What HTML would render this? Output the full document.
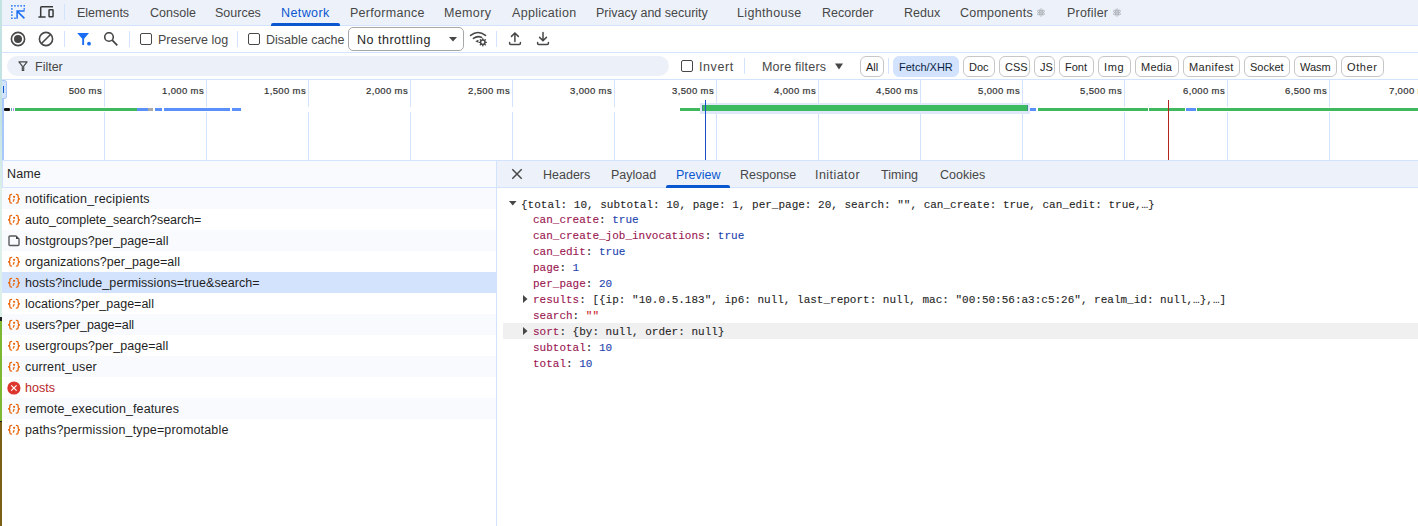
<!DOCTYPE html>
<html><head><meta charset="utf-8">
<style>
*{box-sizing:border-box}
html,body{margin:0;padding:0}
body{width:1418px;height:526px;overflow:hidden;position:relative;background:#fff;font-family:"Liberation Sans",sans-serif;color:#1f1f1f}
.a{position:absolute}
.t{position:absolute;white-space:pre;line-height:14px;font-size:12.5px;color:#474747}
.hl{position:absolute;height:1px;background:#d3e3fd}
.vl{position:absolute;width:1px;background:#d3e3fd}
.chip{position:absolute;top:56px;height:21px;border:1px solid #c7c7c7;border-radius:6px;font-size:11px;line-height:21px;color:#1f1f1f;white-space:pre;padding-left:5px}
.row{position:absolute;left:2px;width:494px;height:21px}
.rt{position:absolute;left:23px;top:4px;white-space:pre;font-size:12.5px;line-height:14px;color:#1f1f1f}
.ic{position:absolute;left:6px;top:5px}
.js{position:absolute;white-space:pre;font-family:"Liberation Mono",monospace;font-size:11px;line-height:16px;color:#1f1f1f;-webkit-text-stroke:0.1px}
.k{color:#9a1550}
.b{color:#1c42ae}
.s{color:#c5221f}
.n{color:#474747}
.tl{position:absolute;top:86px;font-size:9.5px;line-height:9px;color:#333;white-space:pre;text-align:right;letter-spacing:0.35px;-webkit-text-stroke:0.2px}
</style></head>
<body>
<!-- left strip of underlying page -->
<div class="a" style="left:0;top:0;width:2px;height:317px;background:linear-gradient(#c3e3e3 0,#c3e3e3 120px,#dcefe9 190px,#dcefe9 317px)"></div>
<div class="a" style="left:0;top:317px;width:2px;height:4px;background:#222"></div>
<div class="a" style="left:0;top:321px;width:2px;height:100px;background:#7cb832"></div>
<div class="a" style="left:0;top:421px;width:2px;height:1px;background:#222"></div>
<div class="a" style="left:0;top:422px;width:2px;height:104px;background:#7a5f14"></div>

<!-- ===== main tab bar ===== -->
<div class="a" style="left:2px;top:0;width:1416px;height:25px;background:#edf2fa"></div>
<div class="hl" style="left:2px;top:25px;width:1416px"></div>
<!-- inspect + device icons -->
<svg class="a" style="left:8px;top:2px" width="50" height="20" viewBox="0 0 50 20">
<g fill="#1b6ef3">
<rect x="3.1" y="3.1" width="1.5" height="1.5"/><rect x="6.2" y="3.1" width="1.5" height="1.5"/><rect x="9.3" y="3.1" width="1.5" height="1.5"/><rect x="12.4" y="3.1" width="1.5" height="1.5"/><rect x="15.5" y="3.1" width="1.5" height="1.5"/>
<rect x="3.1" y="6.2" width="1.5" height="1.5"/><rect x="3.1" y="9.3" width="1.5" height="1.5"/><rect x="3.1" y="12.4" width="1.5" height="1.5"/><rect x="3.1" y="15.5" width="1.5" height="1.5"/>
<rect x="15.5" y="6.2" width="1.5" height="1.5"/><rect x="6.2" y="15.5" width="1.5" height="1.5"/>
</g>
<path d="M9.1 16.7 V9.1 H16.7 M9.1 9.1 L16.4 16.4" stroke="#1b6ef3" stroke-width="1.5" fill="none"/>
<path d="M30.4 15 H37.6 M32.7 15 V5.5 Q32.7 4.75 33.5 4.75 H45" stroke="#3a3a3a" stroke-width="1.5" fill="none"/>
<rect x="41.05" y="7.75" width="4" height="7.1" rx="0.6" stroke="#3a3a3a" stroke-width="1.5" fill="none"/>
</svg>
<div class="vl" style="left:64px;top:4px;height:16px"></div>
<div class="t" style="left:77px;top:6px">Elements</div>
<div class="t" style="left:150px;top:6px">Console</div>
<div class="t" style="left:215px;top:6px">Sources</div>
<div class="t" style="left:281px;top:6px;color:#0b57d0;letter-spacing:0.4px">Network</div>
<div class="a" style="left:271px;top:23px;width:69px;height:3px;background:#0b57d0;border-radius:2px 2px 0 0"></div>
<div class="t" style="left:350px;top:6px;letter-spacing:0.28px">Performance</div>
<div class="t" style="left:444px;top:6px;letter-spacing:0.35px">Memory</div>
<div class="t" style="left:512px;top:6px;letter-spacing:0.3px">Application</div>
<div class="t" style="left:596px;top:6px">Privacy and security</div>
<div class="t" style="left:737px;top:6px;letter-spacing:0.35px">Lighthouse</div>
<div class="t" style="left:822px;top:6px">Recorder</div>
<div class="t" style="left:904px;top:6px">Redux</div>
<div class="t" style="left:960px;top:6px;letter-spacing:0.2px">Components</div>
<div class="t" style="left:1067px;top:6px;letter-spacing:0.2px">Profiler</div>
<svg class="a" style="left:1036px;top:7px" width="10" height="11" viewBox="0 0 10 11"><g stroke="#a9adb3" stroke-width="0.7" fill="none"><ellipse cx="5" cy="5.5" rx="1.5" ry="3.9"/><ellipse cx="5" cy="5.5" rx="1.5" ry="3.9" transform="rotate(60 5 5.5)"/><ellipse cx="5" cy="5.5" rx="1.5" ry="3.9" transform="rotate(-60 5 5.5)"/></g><circle cx="5" cy="5.5" r="0.8" fill="#a9adb3"/></svg>
<svg class="a" style="left:1112px;top:7px" width="10" height="11" viewBox="0 0 10 11"><g stroke="#a9adb3" stroke-width="0.7" fill="none"><ellipse cx="5" cy="5.5" rx="1.5" ry="3.9"/><ellipse cx="5" cy="5.5" rx="1.5" ry="3.9" transform="rotate(60 5 5.5)"/><ellipse cx="5" cy="5.5" rx="1.5" ry="3.9" transform="rotate(-60 5 5.5)"/></g><circle cx="5" cy="5.5" r="0.8" fill="#a9adb3"/></svg>

<!-- ===== toolbar ===== -->
<!-- record -->
<svg class="a" style="left:10px;top:31px" width="16" height="16" viewBox="0 0 16 16">
<circle cx="8" cy="8" r="6.6" stroke="#474747" stroke-width="1.6" fill="none"/><circle cx="8" cy="8" r="4" fill="#474747"/>
</svg>
<!-- clear -->
<svg class="a" style="left:38px;top:31px" width="16" height="16" viewBox="0 0 16 16">
<circle cx="8" cy="8" r="6.6" stroke="#474747" stroke-width="1.6" fill="none"/><path d="M3.5 12.5 L12.5 3.5" stroke="#474747" stroke-width="1.6"/>
</svg>
<div class="vl" style="left:64px;top:31px;height:16px"></div>
<!-- filter funnel -->
<svg class="a" style="left:76px;top:32px" width="16" height="15" viewBox="0 0 16 15">
<path d="M1.2 1 H13 L8.1 6.8 V12.9 H6.2 V6.8 Z" fill="#1b6ef3"/><circle cx="13" cy="11.7" r="1.9" fill="#1b6ef3"/>
</svg>
<!-- search -->
<svg class="a" style="left:103px;top:32px" width="16" height="15" viewBox="0 0 16 15">
<circle cx="6" cy="5" r="4.3" stroke="#474747" stroke-width="1.6" fill="none"/><path d="M9.2 8.2 L14.3 13.3" stroke="#474747" stroke-width="1.8"/>
</svg>
<div class="vl" style="left:129px;top:31px;height:16px"></div>
<div class="a" style="left:140px;top:33px;width:12px;height:12px;border:1.5px solid #474747;border-radius:2px"></div>
<div class="t" style="left:158px;top:33px">Preserve log</div>
<div class="vl" style="left:237px;top:31px;height:16px"></div>
<div class="a" style="left:248px;top:33px;width:12px;height:12px;border:1.5px solid #474747;border-radius:2px"></div>
<div class="t" style="left:266px;top:33px">Disable cache</div>
<div class="a" style="left:348px;top:27px;width:116px;height:24px;border:1px solid #a8a8a8;border-radius:5px"></div>
<div class="t" style="left:357px;top:33px;color:#1f1f1f;letter-spacing:0.5px">No throttling</div>
<svg class="a" style="left:449px;top:37px" width="8" height="5" viewBox="0 0 8 5"><path d="M0 0 H8 L4 4.5 Z" fill="#474747"/></svg>
<!-- wifi gear / upload / download -->
<svg class="a" style="left:466px;top:28px" width="90" height="22" viewBox="466 28 90 22">
<g stroke="#474747" fill="none" stroke-linecap="round">
<path d="M470.6 35.4 Q478 29.6 485.5 35.4" stroke-width="1.6"/>
<path d="M473.4 38.3 Q477.6 35.4 481.6 37.4" stroke-width="1.6"/>
<path d="M478 40.6 L476.6 41.3 L478 42" stroke-width="1.2"/>
<circle cx="482.8" cy="42.3" r="2.2" stroke-width="1.5"/>
<path d="M482.8 38.7 V39.6 M482.8 45 V45.9 M479.2 42.3 H480.1 M485.5 42.3 H486.4 M480.3 39.8 L480.9 40.4 M484.7 44.2 L485.3 44.8 M480.3 44.8 L480.9 44.2 M484.7 40.4 L485.3 39.8" stroke-width="1.3"/>
<path d="M514.9 41.6 V33.2 M511.5 36.4 L514.9 33 L518.3 36.4" stroke-width="1.5"/>
<path d="M509.6 42.4 V43.3 Q509.6 44.4 510.7 44.4 H519.3 Q520.4 44.4 520.4 43.3 V42.4" stroke-width="1.5"/>
<path d="M543 32.4 V40.6 M539.6 37.4 L543 40.8 L546.4 37.4" stroke-width="1.5"/>
<path d="M537.6 42.4 V43.3 Q537.6 44.4 538.7 44.4 H547.3 Q548.4 44.4 548.4 43.3 V42.4" stroke-width="1.5"/>
</g>
</svg>
<div class="vl" style="left:496px;top:31px;height:16px"></div>
<div class="hl" style="left:2px;top:52px;width:1416px"></div>

<!-- ===== filter bar ===== -->
<div class="a" style="left:7px;top:56px;width:662px;height:20px;background:#ecf1f9;border-radius:10px"></div>
<svg class="a" style="left:18px;top:61px" width="10" height="10" viewBox="0 0 10 10">
<path d="M0.9 0.9 H9.1 L5.7 5.2 V9.6 H4.3 V5.2 Z" stroke="#474747" stroke-width="1.15" fill="none" stroke-linejoin="round"/>
</svg>
<div class="t" style="left:35px;top:60px">Filter</div>
<div class="a" style="left:681px;top:60px;width:12px;height:12px;border:1.5px solid #474747;border-radius:2px"></div>
<div class="t" style="left:699px;top:60px;letter-spacing:0.6px">Invert</div>
<div class="vl" style="left:744px;top:58px;height:16px"></div>
<div class="t" style="left:762px;top:60px;letter-spacing:0.2px">More filters</div>
<svg class="a" style="left:835px;top:63px" width="8" height="7" viewBox="0 0 8 7"><path d="M0 0.5 H8 L4 6.5 Z" fill="#474747"/></svg>
<div class="chip" style="left:860px;width:24px">All</div>
<div class="vl" style="left:888px;top:58px;height:16px"></div>
<div class="chip" style="left:893px;width:66px;border-color:#d3e3fd;background:#d3e3fd;color:#0a1f44">Fetch/XHR</div>
<div class="chip" style="left:963px;width:32px">Doc</div>
<div class="chip" style="left:999px;width:31px">CSS</div>
<div class="chip" style="left:1034px;width:21px">JS</div>
<div class="chip" style="left:1059px;width:35px">Font</div>
<div class="chip" style="left:1098px;width:33px;letter-spacing:0.7px">Img</div>
<div class="chip" style="left:1135px;width:44px;letter-spacing:0.25px">Media</div>
<div class="chip" style="left:1183px;width:57px;letter-spacing:0.4px">Manifest</div>
<div class="chip" style="left:1244px;width:46px">Socket</div>
<div class="chip" style="left:1294px;width:43px">Wasm</div>
<div class="chip" style="left:1341px;width:43px;letter-spacing:0.6px">Other</div>
<div class="hl" style="left:2px;top:79px;width:1416px"></div>

<!-- ===== overview ===== -->
<div class="vl" style="left:104px;top:80px;height:27px"></div><div class="vl" style="left:104px;top:112px;height:48px"></div>
<div class="vl" style="left:206px;top:80px;height:27px"></div><div class="vl" style="left:206px;top:112px;height:48px"></div>
<div class="vl" style="left:308px;top:80px;height:27px"></div><div class="vl" style="left:308px;top:112px;height:48px"></div>
<div class="vl" style="left:410px;top:80px;height:27px"></div><div class="vl" style="left:410px;top:112px;height:48px"></div>
<div class="vl" style="left:512px;top:80px;height:27px"></div><div class="vl" style="left:512px;top:112px;height:48px"></div>
<div class="vl" style="left:614px;top:80px;height:27px"></div><div class="vl" style="left:614px;top:112px;height:48px"></div>
<div class="vl" style="left:716px;top:80px;height:27px"></div><div class="vl" style="left:716px;top:112px;height:48px"></div>
<div class="vl" style="left:818px;top:80px;height:27px"></div><div class="vl" style="left:818px;top:112px;height:48px"></div>
<div class="vl" style="left:920px;top:80px;height:27px"></div><div class="vl" style="left:920px;top:112px;height:48px"></div>
<div class="vl" style="left:1022px;top:80px;height:27px"></div><div class="vl" style="left:1022px;top:112px;height:48px"></div>
<div class="vl" style="left:1124px;top:80px;height:27px"></div><div class="vl" style="left:1124px;top:112px;height:48px"></div>
<div class="vl" style="left:1227px;top:80px;height:27px"></div><div class="vl" style="left:1227px;top:112px;height:48px"></div>
<div class="vl" style="left:1329px;top:80px;height:27px"></div><div class="vl" style="left:1329px;top:112px;height:48px"></div>
<div class="tl" style="left:40px;width:62px">500 ms</div>
<div class="tl" style="left:142px;width:62px">1,000 ms</div>
<div class="tl" style="left:244px;width:62px">1,500 ms</div>
<div class="tl" style="left:346px;width:62px">2,000 ms</div>
<div class="tl" style="left:448px;width:62px">2,500 ms</div>
<div class="tl" style="left:550px;width:62px">3,000 ms</div>
<div class="tl" style="left:652px;width:62px">3,500 ms</div>
<div class="tl" style="left:754px;width:62px">4,000 ms</div>
<div class="tl" style="left:856px;width:62px">4,500 ms</div>
<div class="tl" style="left:958px;width:62px">5,000 ms</div>
<div class="tl" style="left:1060px;width:62px">5,500 ms</div>
<div class="tl" style="left:1163px;width:62px">6,000 ms</div>
<div class="tl" style="left:1265px;width:62px">6,500 ms</div>
<div class="tl" style="left:1389px;width:62px;text-align:left">7,000 ms</div>
<!-- bars -->
<div class="a" style="left:4px;top:108px;width:6px;height:3px;background:#111;border-radius:1px"></div>
<div class="a" style="left:11px;top:108px;width:1px;height:3px;background:#5aa9b0"></div>
<div class="a" style="left:13px;top:108px;width:1px;height:3px;background:#c58af9"></div>
<div class="a" style="left:15px;top:108px;width:122px;height:3px;background:#3fb85e"></div>
<div class="a" style="left:137px;top:108px;width:11px;height:3px;background:#5b8ff9"></div>
<div class="a" style="left:148px;top:108px;width:5px;height:3px;background:#aaa"></div>
<div class="a" style="left:155px;top:108px;width:7px;height:3px;background:#5b8ff9"></div>
<div class="a" style="left:164px;top:108px;width:66px;height:3px;background:#5b8ff9"></div>
<div class="a" style="left:232px;top:108px;width:9px;height:3px;background:#5b8ff9"></div>
<div class="a" style="left:680px;top:108px;width:20px;height:3px;background:#3fb85e"></div>
<div class="a" style="left:700px;top:103px;width:330px;height:11px;background:#dfe8fb"></div>
<div class="a" style="left:702px;top:105px;width:326px;height:6px;background:#3bba5f;border-left:1px solid #3f8f86;border-right:1px solid #3f8f86"></div>
<div class="a" style="left:1030px;top:108px;width:6px;height:3px;background:#5b8ff9"></div>
<div class="a" style="left:1038px;top:108px;width:110px;height:3px;background:#3fb85e"></div>
<div class="a" style="left:1149px;top:108px;width:36px;height:3px;background:#3fb85e"></div>
<div class="a" style="left:1186px;top:108px;width:10px;height:3px;background:#5b8ff9"></div>
<div class="a" style="left:1197px;top:108px;width:221px;height:3px;background:#3fb85e"></div>
<div class="a" style="left:705px;top:100px;width:1px;height:60px;background:#1a4fc8"></div>
<div class="a" style="left:1168px;top:100px;width:1px;height:60px;background:#b3261e"></div>
<!-- left handle -->
<div class="a" style="left:2px;top:98px;width:2px;height:62px;background:#a8c7fa"></div>
<div class="a" style="left:2px;top:80px;width:5px;height:19px;background:#d3e3fd;border:1px solid #a8c7fa;border-left:none;border-radius:0 3px 3px 0"></div>
<div class="a" style="left:3px;top:86px;width:1px;height:7px;background:#0b57d0"></div>
<div class="hl" style="left:2px;top:160px;width:1416px"></div>

<!-- ===== name panel ===== -->
<div class="a" style="left:2px;top:161px;width:494px;height:26px;background:#f8fafd"></div>
<div class="hl" style="left:2px;top:187px;width:494px"></div>
<div class="vl" style="left:2px;top:161px;height:26px"></div>
<div class="t" style="left:7px;top:167px;color:#1f1f1f;font-size:12.5px;letter-spacing:0.15px">Name</div>
<div class="row" style="top:188px;background:#f8fafd"><svg class="a" style="left:5px;top:3px" width="15" height="14" viewBox="0 0 15 14"><use href="#jsn"/></svg><div class="rt" style="letter-spacing:0.2px">notification_recipients</div></div>
<div class="row" style="top:209px;background:#fff"><svg class="a" style="left:5px;top:3px" width="15" height="14" viewBox="0 0 15 14"><use href="#jsn"/></svg><div class="rt" style="letter-spacing:-0.07px">auto_complete_search?search=</div></div>
<div class="row" style="top:230px;background:#f8fafd"><svg class="a" style="left:5px;top:3px" width="15" height="15" viewBox="0 0 15 15"><path d="M3.1 3 H9 L12 6 V11.4 Q12 12.5 10.9 12.5 H3.1 Q2 12.5 2 11.4 V4.1 Q2 3 3.1 3 Z" stroke="#5a5a5a" stroke-width="1.4" fill="none" stroke-linejoin="round"/><path d="M9 3.3 V6 H11.7 Z" fill="#3a3a3a"/></svg><div class="rt" style="letter-spacing:0.09px">hostgroups?per_page=all</div></div>
<div class="row" style="top:251px;background:#fff"><svg class="a" style="left:5px;top:3px" width="15" height="14" viewBox="0 0 15 14"><use href="#jsn"/></svg><div class="rt" style="letter-spacing:0.04px">organizations?per_page=all</div></div>
<div class="row" style="top:272px;background:#d3e3fd"><svg class="a" style="left:5px;top:3px" width="15" height="14" viewBox="0 0 15 14"><use href="#jsn"/></svg><div class="rt" style="letter-spacing:0.07px">hosts?include_permissions=true&amp;search=</div></div>
<div class="row" style="top:293px;background:#fff"><svg class="a" style="left:5px;top:3px" width="15" height="14" viewBox="0 0 15 14"><use href="#jsn"/></svg><div class="rt" style="letter-spacing:0px">locations?per_page=all</div></div>
<div class="row" style="top:314px;background:#f8fafd"><svg class="a" style="left:5px;top:3px" width="15" height="14" viewBox="0 0 15 14"><use href="#jsn"/></svg><div class="rt" style="letter-spacing:-0.06px">users?per_page=all</div></div>
<div class="row" style="top:335px;background:#fff"><svg class="a" style="left:5px;top:3px" width="15" height="14" viewBox="0 0 15 14"><use href="#jsn"/></svg><div class="rt" style="letter-spacing:0.05px">usergroups?per_page=all</div></div>
<div class="row" style="top:356px;background:#f8fafd"><svg class="a" style="left:5px;top:3px" width="15" height="14" viewBox="0 0 15 14"><use href="#jsn"/></svg><div class="rt" style="letter-spacing:0.14px">current_user</div></div>
<div class="row" style="top:377px;background:#fff"><svg class="a" style="left:5px;top:3px" width="15" height="15" viewBox="0 0 15 15"><circle cx="6.9" cy="8" r="6.6" fill="#dc362e"/><path d="M4.2 5.3 L9.6 10.7 M9.6 5.3 L4.2 10.7" stroke="#fff" stroke-width="1.2"/></svg><div class="rt" style="color:#b8282a;letter-spacing:0.05px">hosts</div></div>
<div class="row" style="top:398px;background:#f8fafd"><svg class="a" style="left:5px;top:3px" width="15" height="14" viewBox="0 0 15 14"><use href="#jsn"/></svg><div class="rt" style="letter-spacing:0.1px">remote_execution_features</div></div>
<div class="row" style="top:419px;background:#fff"><svg class="a" style="left:5px;top:3px" width="15" height="14" viewBox="0 0 15 14"><use href="#jsn"/></svg><div class="rt" style="letter-spacing:0.16px">paths?permission_type=promotable</div></div>
<svg width="0" height="0" style="position:absolute"><defs><g id="jsn" fill="none" stroke="#e8670e" stroke-width="1.3" stroke-linecap="round">
<path d="M4.6 3.4 Q2.8 3.4 2.8 5 V6.6 Q2.8 7.8 1 7.8 Q2.8 7.8 2.8 9 V10.6 Q2.8 12.2 4.6 12.2"/>
<path d="M9.4 3.4 Q11.2 3.4 11.2 5 V6.6 Q11.2 7.8 13 7.8 Q11.2 7.8 11.2 9 V10.6 Q11.2 12.2 9.4 12.2"/>
<path d="M7 8.4 L6.3 10.2"/><circle cx="7.1" cy="5.8" r="0.5" fill="#e8670e"/>
</g></defs></svg>
<div class="vl" style="left:496px;top:161px;height:365px"></div>

<!-- ===== detail panel ===== -->
<div class="a" style="left:497px;top:161px;width:921px;height:26px;background:#edf2fa"></div>
<div class="hl" style="left:497px;top:187px;width:921px"></div>
<svg class="a" style="left:511px;top:168px" width="12" height="12" viewBox="0 0 12 12"><path d="M1.3 1.3 L10.7 10.7 M10.7 1.3 L1.3 10.7" stroke="#474747" stroke-width="1.5"/></svg>
<div class="t" style="left:543px;top:168px">Headers</div>
<div class="t" style="left:611px;top:168px">Payload</div>
<div class="t" style="left:676px;top:168px;color:#0b57d0">Preview</div>
<div class="a" style="left:666px;top:185px;width:64px;height:3px;background:#0b57d0;border-radius:2px 2px 0 0"></div>
<div class="t" style="left:740px;top:168px">Response</div>
<div class="t" style="left:815px;top:168px;letter-spacing:0.45px">Initiator</div>
<div class="t" style="left:881px;top:168px">Timing</div>
<div class="t" style="left:940px;top:168px">Cookies</div>
<!-- preview json -->
<svg class="a" style="left:509px;top:201px" width="8" height="5" viewBox="0 0 8 5"><path d="M0 0 H7.5 L3.75 4.5 Z" fill="#474747"/></svg>
<div class="js" style="left:521px;top:197px">{total: 10, subtotal: 10, page: 1, per_page: 20, search: "", can_create: true, can_edit: true,…}</div>
<div class="js" style="left:533px;top:212px"><span class="k">can_create</span>: <span class="b">true</span></div>
<div class="js" style="left:533px;top:228px"><span class="k">can_create_job_invocations</span>: <span class="b">true</span></div>
<div class="js" style="left:533px;top:244px"><span class="k">can_edit</span>: <span class="b">true</span></div>
<div class="js" style="left:533px;top:260px"><span class="k">page</span>: <span class="b">1</span></div>
<div class="js" style="left:533px;top:276px"><span class="k">per_page</span>: <span class="b">20</span></div>
<svg class="a" style="left:523px;top:295px" width="5" height="8" viewBox="0 0 5 8"><path d="M0 0 V8 L4.5 4 Z" fill="#474747"/></svg>
<div class="js" style="left:533px;top:292px"><span class="k">results</span>: [{ip: "10.0.5.183", ip6: null, last_report: null, mac: "00:50:56:a3:c5:26", realm_id: null,…},…]</div>
<div class="js" style="left:533px;top:308px"><span class="k">search</span>: <span class="s">""</span></div>
<div class="a" style="left:503px;top:323px;width:915px;height:16px;background:#f0f0f0"></div>
<svg class="a" style="left:523px;top:327px" width="5" height="8" viewBox="0 0 5 8"><path d="M0 0 V8 L4.5 4 Z" fill="#474747"/></svg>
<div class="js" style="left:533px;top:324px"><span class="k">sort</span>: {by: null, order: null}</div>
<div class="js" style="left:533px;top:340px"><span class="k">subtotal</span>: <span class="b">10</span></div>
<div class="js" style="left:533px;top:356px"><span class="k">total</span>: <span class="b">10</span></div>

</body></html>
